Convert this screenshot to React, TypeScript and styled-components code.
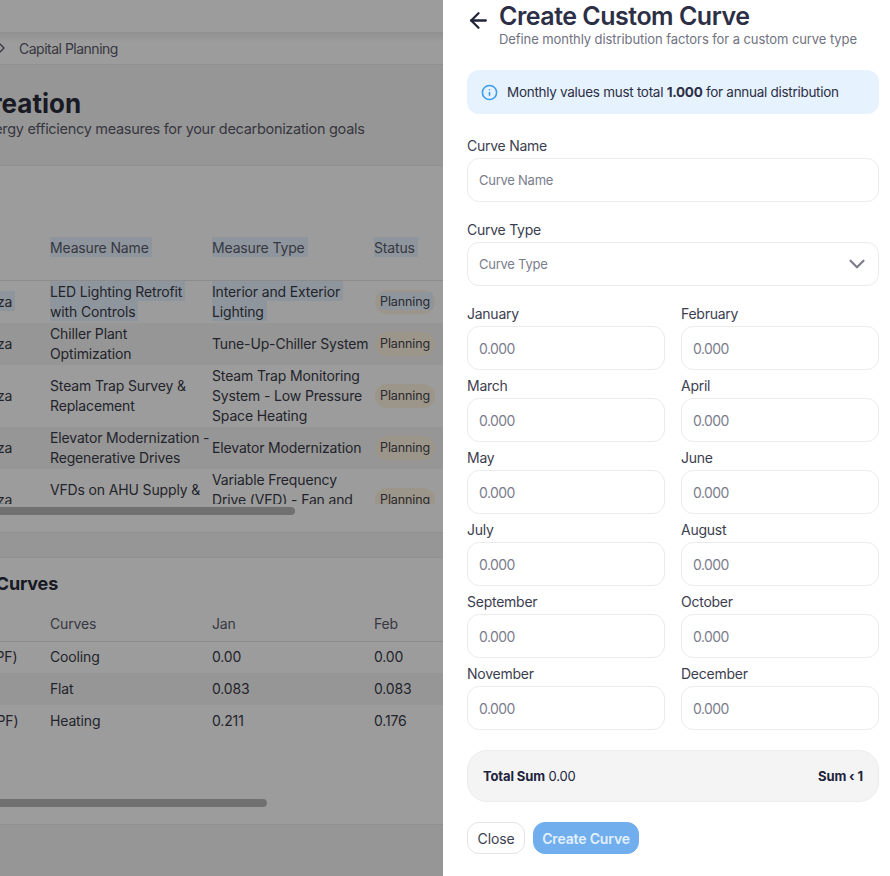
import React from "react";
import styled, { createGlobalStyle } from "styled-components";
import { ArrowLeft, ChevronDown, ChevronRight, Info } from "lucide-react";

const FONT = `Inter, "Noto Sans", "Liberation Sans", sans-serif`;

const GlobalStyle = createGlobalStyle`
  html, body {
    margin: 0;
    height: 100%;
    background: #fff;
    font-family: ${FONT};
    overflow: hidden;
  }
  * { box-sizing: border-box; }
`;

const Page = styled.div`
  width: 890px;
  height: 876px;
  overflow: hidden;
  position: relative;
  background: #f6f6f6;
  color: #2a2b3a;
  font-size: 14px;
  letter-spacing: -0.25px;
`;

const Scrolled = styled.div`
  margin-left: -120px;
  width: 1010px;
`;

const TopBar = styled.div`
  height: 32px;
  background: #fff;
`;

const Breadcrumb = styled.div`
  height: 33px;
  display: flex;
  align-items: center;
  padding-left: 114px;
  gap: 9px;
  background: linear-gradient(#ececec, #fff 10px);
  border-bottom: 1px solid #ececec;
  color: #5c5c6c;
  letter-spacing: -0.5px;
`;

const Header = styled.header`
  height: 101px;
  padding-top: 24px;
  background: #f6f6f6;
  border-bottom: 1px solid #ececec;
`;

const Title = styled.h1`
  margin: 0 0 0 -25px;
  font-size: 26px;
  line-height: 30px;
  font-weight: 700;
  letter-spacing: 0;
`;

const Subtitle = styled.p`
  margin: 0 0 0 53px;
  font-size: 14.5px;
  line-height: 20px;
  letter-spacing: -0.3px;
  color: #5a5b69;
`;

const Section = styled.section<{ $height: number; $top?: number }>`
  height: ${(p) => p.$height}px;
  padding-top: ${(p) => p.$top ?? 0}px;
  background: #fff;
  border-bottom: 1px solid #ececec;
`;

const Band = styled.div`
  height: 25px;
  background: #f6f6f6;
  border-bottom: 1px solid #ececec;
`;

const TableClip = styled.div<{ $height: number }>`
  height: ${(p) => p.$height}px;
  overflow: hidden;
`;

const Table = styled.table`
  border-collapse: collapse;
  table-layout: fixed;
  width: 972px;
  margin-left: 8px;
  letter-spacing: -0.15px;
`;

const Column = styled.col`
  width: 162px;
`;

const HeadCell = styled.th<{ $height: number; $top?: number }>`
  height: ${(p) => p.$height}px;
  padding: ${(p) => p.$top ?? 0}px 0 0;
  text-align: left;
  font-weight: 400;
  color: #5c5c6c;
  border-bottom: 1px solid #e4e4e4;
  line-height: 20px;
`;

const BodyRow = styled.tr`
  &:nth-child(even) {
    background: #f5f5f5;
  }
`;

const Cell = styled.td<{ $tight?: boolean }>`
  padding: ${(p) => (p.$tight ? "0" : "1px 0")};
  height: ${(p) => (p.$tight ? "32px" : "auto")};
  line-height: 20px;
  vertical-align: middle;
  color: #3a3b47;
  white-space: pre-line;
`;

const Selected = styled.span`
  background: #e8f4ff;
  padding: 2px 3px 1px 0;
  box-decoration-break: clone;
  -webkit-box-decoration-break: clone;
`;

const Pill = styled.span`
  display: inline-block;
  width: 60px;
  height: 24px;
  padding-left: 5px;
  margin-left: 1px;
  border-radius: 12px;
  background: #fff3e0;
  color: #46464f;
  font-size: 12.5px;
  line-height: 24px;
  letter-spacing: -0.1px;
  white-space: nowrap;
`;

const ScrollThumb = styled.div<{ $width: number; $top: number }>`
  width: ${(p) => p.$width + 120}px;
  height: 8px;
  margin-top: ${(p) => p.$top}px;
  border-radius: 4px;
  background: #b8b8b8;
`;

const SectionTitle = styled.h2`
  margin: 0 0 0 11px;
  padding-top: 14px;
  font-size: 18px;
  line-height: 24px;
  font-weight: 700;
  letter-spacing: -0.2px;
`;

const Scrim = styled.div`
  position: absolute;
  inset: 0;
  background: rgba(0, 0, 0, 0.39);
`;

const Drawer = styled.aside`
  position: absolute;
  top: 0;
  right: 0;
  bottom: 0;
  width: 447px;
  background: #fff;
  padding: 0 11px 0 24px;
  color: #2c2f45;
`;

const DrawerHead = styled.div`
  display: flex;
  align-items: flex-start;
  height: 70px;
  padding-top: 1px;
  gap: 8px;
`;

const BackIcon = styled(ArrowLeft)`
  flex: none;
  margin: 7px 0 0 -1px;
  color: #20243a;
`;

const DrawerTitle = styled.h2`
  margin: 0 0 1px;
  font-size: 25px;
  line-height: 30px;
  font-weight: 600;
  letter-spacing: -0.5px;
  color: #2c2f45;
`;

const DrawerSub = styled.p`
  margin: 0;
  font-size: 13px;
  line-height: 15px;
  letter-spacing: -0.08px;
  color: #70727f;
`;

const Notice = styled.div`
  height: 44px;
  display: flex;
  align-items: center;
  gap: 9px;
  padding-left: 14px;
  border-radius: 12px;
  background: #e6f3fe;
  color: #2c2f45;
  font-size: 13.5px;
  letter-spacing: -0.29px;
  margin-bottom: 22px;
  b {
    font-weight: 700;
  }
`;

const InfoIcon = styled(Info)`
  flex: none;
  color: #3a9df0;
`;

const Field = styled.label<{ $gap?: number }>`
  display: block;
  margin-bottom: ${(p) => p.$gap ?? 18}px;
`;

const Label = styled.span`
  display: block;
  height: 22px;
  line-height: 20px;
  font-size: 14px;
  color: #3c3e50;
`;

const Input = styled.input<{ $small?: boolean }>`
  display: block;
  width: 100%;
  height: 44px;
  padding: 0 11px;
  border: 1px solid #ebebee;
  border-radius: 12px;
  outline: none;
  background: #fff;
  font-family: ${FONT};
  font-size: ${(p) => (p.$small ? 13 : 14)}px;
  letter-spacing: ${(p) => (p.$small ? -0.25 : -0.6)}px;
  &::placeholder {
    color: #7b7d8c;
    opacity: 1;
  }
`;

const Select = styled.div`
  height: 44px;
  padding: 0 8px 0 11px;
  display: flex;
  align-items: center;
  justify-content: space-between;
  border: 1px solid #ebebee;
  border-radius: 12px;
  font-size: 13px;
  color: #7b7d8c;
`;

const MonthGrid = styled.div`
  display: grid;
  grid-template-columns: 198px 198px;
  column-gap: 16px;
  row-gap: 6px;
`;

const SumBox = styled.div`
  height: 52px;
  margin-top: 20px;
  padding: 0 15px;
  display: flex;
  align-items: center;
  justify-content: space-between;
  border: 1px solid #ececee;
  border-radius: 20px;
  background: #f4f4f5;
  font-size: 13px;
  letter-spacing: -0.13px;
  color: #20233a;
  b {
    font-weight: 700;
  }
`;

const Actions = styled.div`
  display: flex;
  gap: 8px;
  margin-top: 20px;
`;

const Button = styled.button<{ $primary?: boolean }>`
  height: 32px;
  width: ${(p) => (p.$primary ? 106 : 58)}px;
  padding: 0;
  border-radius: 12px;
  border: 1px solid ${(p) => (p.$primary ? "#70aeee" : "#e4e4e8")};
  background: ${(p) => (p.$primary ? "#70aeee" : "#fff")};
  color: ${(p) => (p.$primary ? "#e3f0fd" : "#3c3e50")};
  font-family: ${FONT};
  font-size: 14px;
  font-weight: ${(p) => (p.$primary ? 600 : 400)};
  letter-spacing: -0.15px;
`;

const measures = [
  { site: "Northampton Plaza", name: "LED Lighting Retrofit\nwith Controls", type: "Interior and Exterior\nLighting" },
  { site: "Northampton Plaza", name: "Chiller Plant\nOptimization", type: "Tune-Up-Chiller System" },
  { site: "Northampton Plaza", name: "Steam Trap Survey &\nReplacement", type: "Steam Trap Monitoring\nSystem - Low Pressure\nSpace Heating" },
  { site: "Northampton Plaza", name: "Elevator Modernization -\nRegenerative Drives", type: "Elevator Modernization" },
  { site: "Northampton Plaza", name: "VFDs on AHU Supply &\nReturn Fans", type: "Variable Frequency\nDrive (VFD) - Fan and\nPump Motors" },
];

const curves = [
  { source: "Retail Cooling (CPF)", curve: "Cooling", jan: "0.00", feb: "0.00" },
  { source: "Standard", curve: "Flat", jan: "0.083", feb: "0.083" },
  { source: "Retail Heating (HPF)", curve: "Heating", jan: "0.211", feb: "0.176" },
];

const months = [
  "January", "February", "March", "April", "May", "June",
  "July", "August", "September", "October", "November", "December",
];

const Background = () => (
  <Scrolled>
    <TopBar />
    <Breadcrumb>
      <ChevronRight size={16} />
      <span>Capital Planning</span>
    </Breadcrumb>
    <Header>
      <Title>Measure Creation</Title>
      <Subtitle>Select energy efficiency measures for your decarbonization goals</Subtitle>
    </Header>
    <Section $height={367} $top={50}>
      <TableClip $height={288}>
        <Table>
          <colgroup>
            <Column /><Column /><Column /><Column /><Column /><Column />
          </colgroup>
          <thead>
            <tr>
              <HeadCell $height={64}>Site</HeadCell>
              <HeadCell $height={64}><Selected>Measure Name</Selected></HeadCell>
              <HeadCell $height={64}><Selected>Measure Type</Selected></HeadCell>
              <HeadCell $height={64}><Selected>Status</Selected></HeadCell>
            </tr>
          </thead>
          <tbody>
            {measures.map((m, i) => (
              <BodyRow key={m.name}>
                <Cell>{i === 0 ? <Selected>{m.site}</Selected> : m.site}</Cell>
                <Cell>{i === 0 ? <Selected>{m.name}</Selected> : m.name}</Cell>
                <Cell>{i === 0 ? <Selected>{m.type}</Selected> : m.type}</Cell>
                <Cell><Pill>{i === 0 ? <Selected>Planning</Selected> : "Planning"}</Pill></Cell>
              </BodyRow>
            ))}
          </tbody>
        </Table>
      </TableClip>
      <ScrollThumb $width={295} $top={3} />
    </Section>
    <Band />
    <Section $height={267}>
      <SectionTitle>Distribution Curves</SectionTitle>
      <Table>
        <colgroup>
          <Column /><Column /><Column /><Column /><Column /><Column />
        </colgroup>
        <thead>
          <tr>
            <HeadCell $height={45} $top={11}>Source</HeadCell>
            <HeadCell $height={45} $top={11}>Curves</HeadCell>
            <HeadCell $height={45} $top={11}>Jan</HeadCell>
            <HeadCell $height={45} $top={11}>Feb</HeadCell>
          </tr>
        </thead>
        <tbody>
          {curves.map((c) => (
            <BodyRow key={c.curve}>
              <Cell $tight>{c.source}</Cell>
              <Cell $tight>{c.curve}</Cell>
              <Cell $tight>{c.jan}</Cell>
              <Cell $tight>{c.feb}</Cell>
            </BodyRow>
          ))}
        </tbody>
      </Table>
      <ScrollThumb $width={267} $top={62} />
    </Section>
  </Scrolled>
);

const CurveDrawer = () => (
  <Drawer>
    <DrawerHead>
      <BackIcon size={25} strokeWidth={2.2} />
      <div>
        <DrawerTitle>Create Custom Curve</DrawerTitle>
        <DrawerSub>Define monthly distribution factors for a custom curve type</DrawerSub>
      </div>
    </DrawerHead>
    <Notice>
      <InfoIcon size={17} strokeWidth={2.2} />
      <span>Monthly values must total <b>1.000</b> for annual distribution</span>
    </Notice>
    <Field>
      <Label>Curve Name</Label>
      <Input $small placeholder="Curve Name" />
    </Field>
    <Field>
      <Label>Curve Type</Label>
      <Select>
        <span>Curve Type</span>
        <ChevronDown size={26} strokeWidth={2} />
      </Select>
    </Field>
    <MonthGrid>
      {months.map((m) => (
        <Field key={m} $gap={0}>
          <Label>{m}</Label>
          <Input placeholder="0.000" />
        </Field>
      ))}
    </MonthGrid>
    <SumBox>
      <span><b>Total Sum</b> 0.00</span>
      <b>Sum ‹ 1</b>
    </SumBox>
    <Actions>
      <Button>Close</Button>
      <Button $primary>Create Curve</Button>
    </Actions>
  </Drawer>
);

export default function App() {
  return (
    <Page>
      <GlobalStyle />
      <Background />
      <Scrim />
      <CurveDrawer />
    </Page>
  );
}
